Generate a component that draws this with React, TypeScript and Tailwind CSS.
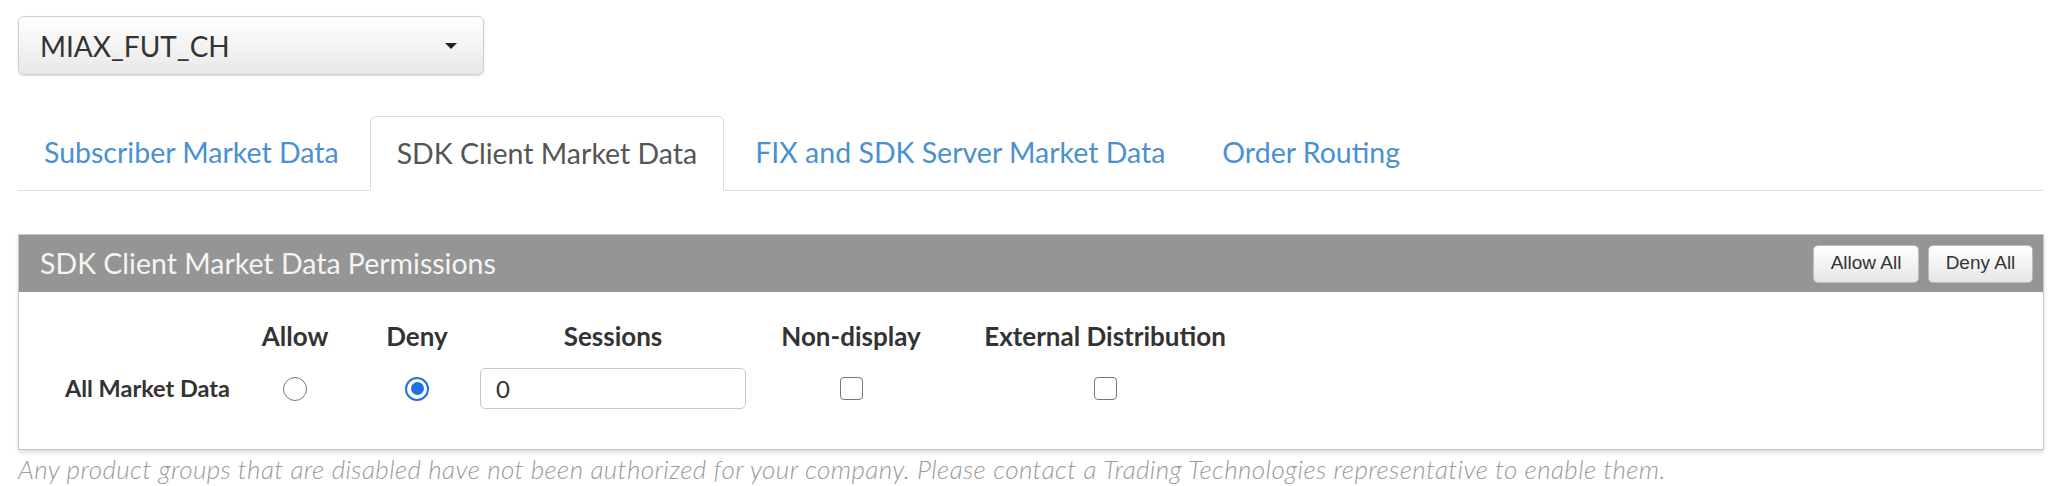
import { useState } from 'react'

const tabs = [
    'Subscriber Market Data',
    'SDK Client Market Data',
    'FIX and SDK Server Market Data',
    'Order Routing',
]

export default function App() {
    const [active, setActive] = useState(1)
    const [perm, setPerm] = useState<'allow' | 'deny'>('deny')

    return (
        <div className="w-[2064px] h-[486px] bg-white pl-[18px] pr-[20px] pt-[16px] font-['Lato',sans-serif] text-[#555]">
            {/* Exchange dropdown */}
            <button className="flex items-center justify-between w-[466px] h-[59px] pl-[21px] pr-[26px] rounded-[6px] border border-[#cfcfcf] bg-gradient-to-b from-white to-[#e8e8e8] shadow-[0_1px_2px_rgba(0,0,0,0.15)] text-[28px] text-[#333]">
                <span>MIAX_FUT_CH</span>
                <span className="w-0 h-0 border-l-[6px] border-r-[6px] border-t-[6px] border-l-transparent border-r-transparent border-t-[#222]" />
            </button>

            {/* Tabs */}
            <div className="flex items-end gap-[5px] mt-[41px] border-b border-[#ddd] h-[75px]">
                {tabs.map((t, i) => (
                    <div
                        key={t}
                        onClick={() => setActive(i)}
                        className={
                            i === active
                                ? 'h-[75px] -mb-px px-[26px] flex items-center rounded-t-[6px] border border-[#ddd] border-b-white bg-white text-[28.5px] text-[#555] cursor-pointer'
                                : 'h-[75px] px-[26px] flex items-center text-[28.5px] text-[#4a90d2] cursor-pointer'
                        }
                    >
                        {t}
                    </div>
                ))}
            </div>

            {/* Permissions panel */}
            <div className="mt-[43px] border border-[#c6c6c6] shadow-[0_3px_4px_rgba(0,0,0,0.12)]">
                <div className="flex items-center justify-between h-[57px] bg-[#959595] pl-[21px] pr-[10px]">
                    <span className="text-[28.5px] text-[#f4f4f4]">SDK Client Market Data Permissions</span>
                    <div className="flex gap-[9px] font-['Liberation_Sans',sans-serif] text-[19px] text-[#333]">
                        <button className="h-[38px] w-[106px] rounded-[5px] border border-[#bdbdbd] bg-gradient-to-b from-white to-[#e6e6e6]">Allow All</button>
                        <button className="h-[38px] w-[105px] rounded-[5px] border border-[#bdbdbd] bg-gradient-to-b from-white to-[#e6e6e6]">Deny All</button>
                    </div>
                </div>

                <div className="bg-white pt-[29px] pb-[40px]">
                    <div className="grid grid-cols-[233px_86px_142px_266px_210px_298px] items-center font-bold text-[#333]">
                        <div />
                        <div className="text-center text-[26px] leading-[30px]">Allow</div>
                        <div className="text-center pl-[16px] text-[26px] leading-[30px]">Deny</div>
                        <div className="text-center text-[26px] leading-[30px]">Sessions</div>
                        <div className="text-center text-[26px] leading-[30px]">Non-display</div>
                        <div className="text-center text-[26px] leading-[30px]">External Distribution</div>

                        <div className="text-right pr-[22px] mt-[17px] text-[23.5px]">All Market Data</div>
                        <div className="flex justify-center mt-[17px]">
                            <span
                                onClick={() => setPerm('allow')}
                                className={
                                    perm === 'allow'
                                        ? 'w-[24px] h-[24px] rounded-full border-[2px] border-[#1f6fe5] flex items-center justify-center'
                                        : 'w-[24px] h-[24px] rounded-full border-[1.5px] border-[#767676] bg-white'
                                }
                            >
                                {perm === 'allow' && <span className="w-[13px] h-[13px] rounded-full bg-[#1f6fe5]" />}
                            </span>
                        </div>
                        <div className="flex justify-center pl-[16px] mt-[17px]">
                            <span
                                onClick={() => setPerm('deny')}
                                className={
                                    perm === 'deny'
                                        ? 'w-[24px] h-[24px] rounded-full border-[2px] border-[#1f6fe5] flex items-center justify-center'
                                        : 'w-[24px] h-[24px] rounded-full border-[1.5px] border-[#767676] bg-white'
                                }
                            >
                                {perm === 'deny' && <span className="w-[13px] h-[13px] rounded-full bg-[#1f6fe5]" />}
                            </span>
                        </div>
                        <div className="mt-[17px]">
                            <input
                                defaultValue="0"
                                className="w-[266px] h-[41px] rounded-[5px] border border-[#c8c8c8] px-[15px] font-normal text-[24px] text-[#333] outline-none"
                            />
                        </div>
                        <div className="flex justify-center mt-[17px]">
                            <span className="w-[23px] h-[23px] rounded-[4px] border-[1.5px] border-[#767676] bg-white" />
                        </div>
                        <div className="flex justify-center mt-[17px]">
                            <span className="w-[23px] h-[23px] rounded-[4px] border-[1.5px] border-[#767676] bg-white" />
                        </div>
                    </div>
                </div>
            </div>

            <p className="mt-[2px] italic font-light text-[26px] leading-[34px] tracking-[0.4px] text-[#9a9a9a]">
                Any product groups that are disabled have not been authorized for your company. Please contact a Trading Technologies representative to enable them.
            </p>
        </div>
    )
}
